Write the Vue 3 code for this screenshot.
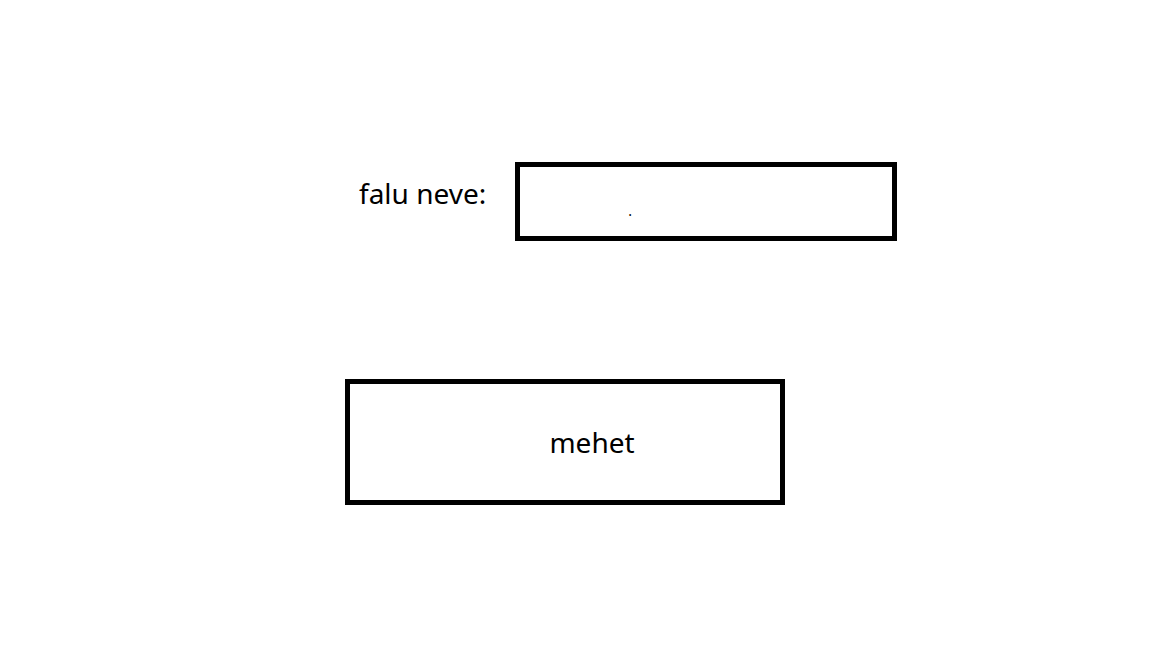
<script setup>
import { ref } from 'vue'

const villageName = ref('.')
</script>

<template>
  <form class="page" @submit.prevent>
    <div class="field">
      <label class="label" for="village-name">falu neve:</label>
      <input id="village-name" v-model="villageName" class="input" type="text" />
    </div>
    <button class="submit" type="submit">mehet</button>
  </form>
</template>

<style scoped>
.page {
  box-sizing: border-box;
  min-height: 100vh;
  padding: 162px 255px 143px 345px;
  background: #fff;
  color: #000;
  font-family: "Noto Sans", "Open Sans", sans-serif;
  font-size: 28px;
  line-height: 38px;
}

.field {
  display: flex;
  align-items: flex-start;
  gap: 29px;
  padding-left: 14px;
}

.label {
  padding-top: 12px;
  white-space: nowrap;
}

.input {
  box-sizing: border-box;
  flex: 1;
  min-width: 0;
  height: 79px;
  margin: 0;
  padding: 18px 0 0 108px;
  border: 5px solid #000;
  border-radius: 0;
  outline: none;
  background: #fff;
  color: #000;
  font-family: inherit;
  font-size: 14px;
}

.submit {
  box-sizing: border-box;
  display: block;
  width: calc(100% - 112px);
  height: 126px;
  margin: 138px 0 0;
  padding: 0 0 0 54px;
  border: 5px solid #000;
  border-radius: 0;
  background: #fff;
  color: #000;
  font: inherit;
  text-align: center;
}
</style>

<style>
body {
  margin: 0;
  background: #fff;
}
</style>
